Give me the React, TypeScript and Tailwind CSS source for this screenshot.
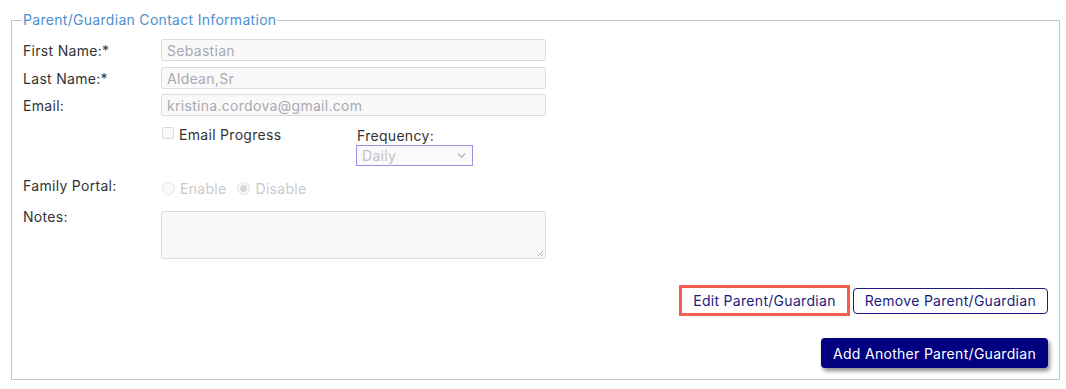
import { ChevronDown } from "lucide-react";

const font = { fontFamily: "Inter, 'Noto Sans', sans-serif" };

const TextRow = ({ label, value, className = "" }: { label: string; value: string; className?: string }) => (
  <div className={`flex items-center ${className}`}>
    <div className="w-[138px] text-[14px] leading-[17px] text-[#333]">{label}</div>
    <div className="w-[385px] h-[22px] border border-[#dcdcdc] bg-[#f9f9f9] rounded-[2px] pl-[5px] flex items-center text-[14px] text-[#a9a9b3]">
      {value}
    </div>
  </div>
);

const Radio = ({ checked, label }: { checked?: boolean; label: string }) => (
  <div className="flex items-center">
    <span className="w-[13px] h-[13px] rounded-full border border-[#e2e2e2] bg-[#fafafa] flex items-center justify-center">
      {checked && <span className="w-[7px] h-[7px] rounded-full bg-[#d6d6d6]" />}
    </span>
    <span className="ml-[5px] text-[14px] leading-[17px] text-[#c8c8cc]">{label}</span>
  </div>
);

export default function App() {
  return (
    <div className="bg-white w-[1066px] h-[389px] pt-[11px] pl-[11px] pr-[6px] tracking-[0.3px]" style={font}>
      <fieldset className="border border-[#c4c4c4] pl-[11px] pr-[11px] pb-[11px] m-0">
        <legend className="ml-[-1px] px-[1px] text-[14px] leading-[18px] text-[#4c8fd3]">
          Parent/Guardian Contact Information
        </legend>
        <div className="flex flex-col pt-[10px]">
          <TextRow label="First Name:*" value="Sebastian" />
          <TextRow label="Last Name:*" value="Aldean,Sr" className="mt-[6px]" />
          <TextRow label="Email:" value="kristina.cordova@gmail.com" className="mt-[5px]" />

          <div className="flex items-start mt-[10px] ml-[138px]">
            <div className="w-[195px] flex items-start">
              <span className="mt-[1px] ml-[1px] w-[12px] h-[12px] border border-[#dadada] bg-[#fafafa] rounded-[2px]" />
              <span className="ml-[5px] text-[14px] leading-[17px] text-[#333]">Email Progress</span>
            </div>
            <div className="flex flex-col">
              <span className="mt-[1px] pl-[1px] text-[14px] leading-[17px] text-[#333]">Frequency:</span>
              <div className="mt-[1px] w-[117px] h-[21px] border-[1.5px] border-[#9a8fe2] bg-[#fafafa] flex items-center justify-between pl-[5px] pr-[4px]">
                <span className="text-[14px] text-[#c2c2c6]">Daily</span>
                <ChevronDown size={13} color="#a8a8ae" strokeWidth={2} />
              </div>
            </div>
          </div>

          <div className="flex items-start mt-[11px]">
            <div className="w-[138px] text-[14px] leading-[17px] text-[#333]">Family Portal:</div>
            <div className="flex items-center gap-[11px] mt-[3px] ml-[1px]">
              <Radio label="Enable" />
              <Radio checked label="Disable" />
            </div>
          </div>

          <div className="flex items-start mt-[11px]">
            <div className="w-[138px] text-[14px] leading-[17px] text-[#333]">Notes:</div>
            <div className="relative mt-[3px] w-[385px] h-[48px] border border-[#dcdcdc] bg-[#f9f9f9] rounded-[2px]">
              <svg className="absolute right-[1px] bottom-[1px]" width="7" height="7" viewBox="0 0 7 7">
                <path d="M6 1L1 6M6 4L4 6" stroke="#9a9a9a" strokeWidth="0.8" />
              </svg>
            </div>
          </div>

          <div className="flex justify-end items-center gap-[3px] mt-[26px]">
            <button className="h-[31px] border-[3px] border-[#f45d4f] bg-white px-[11px] text-[14px] text-[#1c1c7e]">
              Edit Parent/Guardian
            </button>
            <button className="h-[26px] border border-[#1c1c7e] rounded-[4px] bg-white px-[11px] text-[14px] text-[#1c1c7e]">
              Remove Parent/Guardian
            </button>
          </div>

          <div className="flex justify-end mt-[22px]">
            <button className="h-[30px] rounded-[4px] bg-[#000080] px-[12px] text-[14px] text-white shadow-[2px_3px_4px_rgba(0,0,0,0.45)]">
              Add Another Parent/Guardian
            </button>
          </div>
        </div>
      </fieldset>
    </div>
  );
}
